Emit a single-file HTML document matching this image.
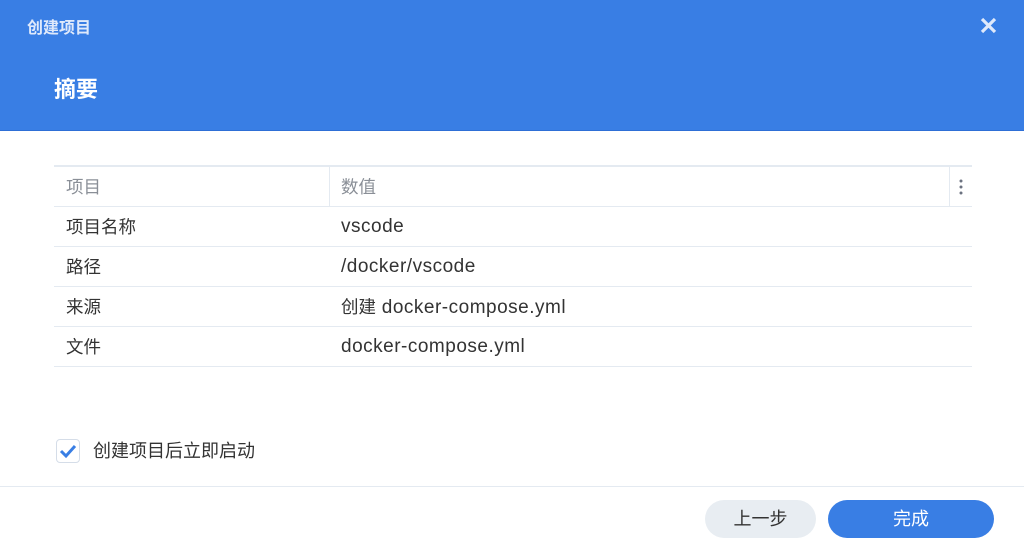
<!DOCTYPE html>
<html><head><meta charset="utf-8"><style>
*{margin:0;padding:0;box-sizing:border-box}
body{width:1024px;height:549px;background:#fff;font-family:"Liberation Sans","Noto Sans CJK SC",sans-serif;position:relative;overflow:hidden;color:#333}
.hd{position:absolute;left:0;top:0;width:1024px;height:131px;background:#397ee4;border-bottom:1px solid #2e6fd6}
.t1{position:absolute;left:27px;top:14px;font-size:16px;color:#dfe9fb;font-weight:bold}
.t2{position:absolute;left:54px;top:72px;font-size:22px;font-weight:bold;color:#fff}
.x{position:absolute;left:980px;top:17px}
.tbl{position:absolute;left:54px;top:165px;width:918px;border-top:2px solid #e4eaf1}
.r{height:40px;border-bottom:1px solid #e4eaf1;position:relative;font-size:18px}
.r span{position:absolute;top:0;line-height:40px}
.c1{left:12px;font-size:17.5px}.c2{left:287px;font-size:19px;letter-spacing:0.5px}
.h{height:40px;color:#8a8f97}
.vl{position:absolute;top:0;width:1px;height:40px;background:#e4eaf1}
.cb{position:absolute;left:56px;top:439px;width:24px;height:24px;border:1px solid #d5dde8;border-radius:4px}
.cbl{position:absolute;left:93px;top:437px;font-size:18px;color:#333;line-height:28px}
.fl{position:absolute;left:0;top:486px;width:1024px;height:1px;background:#e4eaf1}
.b1{position:absolute;left:705px;top:500px;width:111px;height:38px;border-radius:19px;background:#e8edf2;color:#333;font-size:18px;text-align:center;line-height:38px}
.b2{position:absolute;left:828px;top:500px;width:166px;height:38px;border-radius:19px;background:#397ee4;color:#fff;font-size:18px;text-align:center;line-height:38px}
</style></head><body>
<div class="hd"><div class="t1">创建项目</div><div class="t2">摘要</div>
<svg class="x" width="17" height="17" viewBox="0 0 17 17"><path d="M2 2L15 15M15 2L2 15" stroke="#dfe9fb" stroke-width="3.2"/></svg></div>
<div class="tbl">
<div class="r h"><span class="c1">项目</span><div class="vl" style="left:275px"></div><span class="c2" style="font-size:17.5px;letter-spacing:0">数值</span><div class="vl" style="left:895px"></div>
<svg style="position:absolute;left:904px;top:12px" width="6" height="16"><circle cx="3" cy="2" r="1.5" fill="#6b7280"/><circle cx="3" cy="8" r="1.5" fill="#6b7280"/><circle cx="3" cy="14" r="1.5" fill="#6b7280"/></svg></div>
<div class="r"><span class="c1">项目名称</span><span class="c2">vscode</span></div>
<div class="r"><span class="c1">路径</span><span class="c2">/docker/vscode</span></div>
<div class="r"><span class="c1">来源</span><span class="c2"><span style="position:static;font-size:17.5px;letter-spacing:0;line-height:inherit">创建</span> docker-compose.yml</span></div>
<div class="r"><span class="c1">文件</span><span class="c2">docker-compose.yml</span></div>
</div>
<div class="cb"><svg width="22" height="22" viewBox="0 0 22 22" style="position:absolute;left:0;top:0"><path d="M4 11L9 16L18 6" stroke="#397ee4" stroke-width="3" fill="none"/></svg></div>
<div class="cbl">创建项目后立即启动</div>
<div class="fl"></div>
<div class="b1">上一步</div><div class="b2">完成</div>
</body></html>
